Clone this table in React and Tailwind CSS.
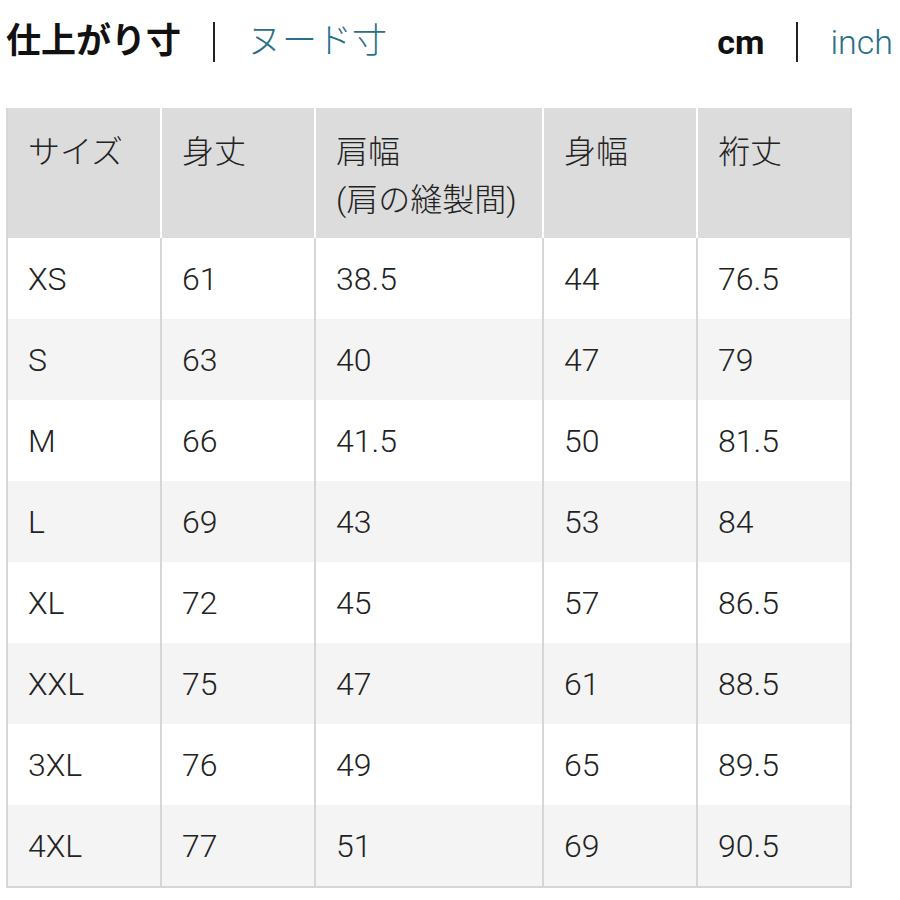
import React from "react";

const rows = [
  ["XS", "61", "38.5", "44", "76.5"],
  ["S", "63", "40", "47", "79"],
  ["M", "66", "41.5", "50", "81.5"],
  ["L", "69", "43", "53", "84"],
  ["XL", "72", "45", "57", "86.5"],
  ["XXL", "75", "47", "61", "88.5"],
  ["3XL", "76", "49", "65", "89.5"],
  ["4XL", "77", "51", "69", "90.5"],
];

const font = { fontFamily: 'Roboto, "Noto Sans CJK JP", sans-serif' };

export default function App() {
  return (
    <div className="w-[900px] h-[900px] bg-white text-[#222]" style={font}>
      <div className="flex items-center justify-between pl-[6px] pr-[7px] pt-[17px] h-[66px]">
        <div className="flex items-center">
          <span className="text-[35px] font-bold text-[#111] leading-none">仕上がり寸</span>
          <span className="mx-[32px] w-[2px] h-[40px] bg-[#222]" />
          <span className="text-[35px] text-[#2a6f8a] leading-none font-light">ヌード寸</span>
        </div>
        <div className="flex items-center">
          <span className="text-[34px] font-bold text-[#111] leading-none">cm</span>
          <span className="mx-[32px] w-[2px] h-[40px] bg-[#222]" />
          <span className="text-[34px] text-[#2a6f8a] leading-none font-light">inch</span>
        </div>
      </div>
      <div className="ml-[6px] mt-[42px] w-[846px] border-l-2 border-r-2 border-b-2 border-[#d6d6d6]">
        <div className="grid grid-cols-[154px_154px_228px_154px_152px] bg-[#dcdcdc] h-[130px] text-[32px] leading-[48px] font-light">
          <div className="pl-[20px] pt-[20px] border-r-2 border-white">サイズ</div>
          <div className="pl-[20px] pt-[20px] border-r-2 border-white">身丈</div>
          <div className="pl-[20px] pt-[20px] border-r-2 border-white">
            肩幅
            <br />
            (肩の縫製間)
          </div>
          <div className="pl-[20px] pt-[20px] border-r-2 border-white">身幅</div>
          <div className="pl-[20px] pt-[20px]">裄丈</div>
        </div>
        {rows.map((r, i) => (
          <div
            key={r[0]}
            className={`grid grid-cols-[154px_154px_228px_154px_152px] h-[81px] text-[32px] font-light ${
              i % 2 === 1 ? "bg-[#f4f4f4]" : "bg-white"
            }`}
          >
            {r.map((c, j) => (
              <div
                key={j}
                className={`flex items-center pl-[20px] ${j < 4 ? "border-r-2 border-[#d6d6d6]" : ""}`}
              >
                {c}
              </div>
            ))}
          </div>
        ))}
      </div>
    </div>
  );
}
